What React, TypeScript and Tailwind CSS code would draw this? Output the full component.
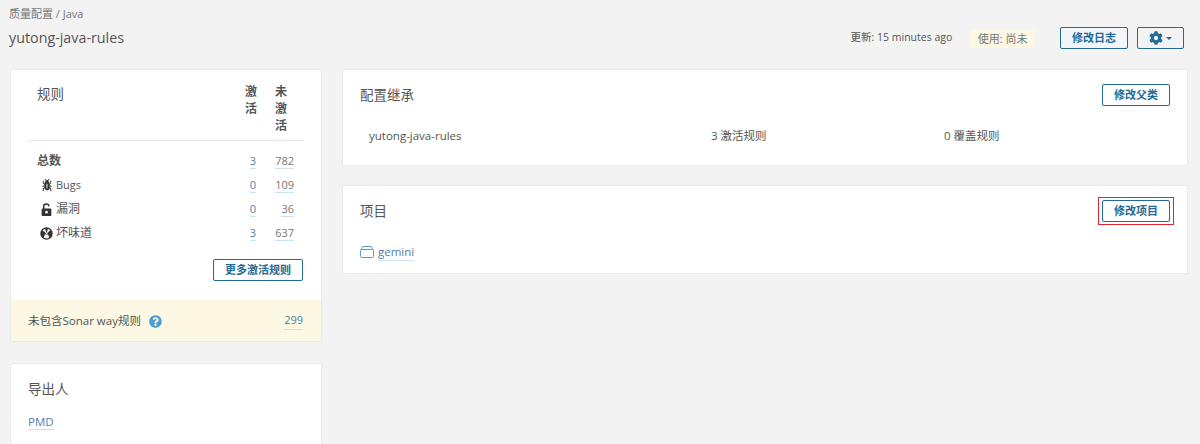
import React from "react";
import { FaCog, FaQuestionCircle } from "react-icons/fa";

/* ── Rule rows ── */

const RULE_ROWS = [
  { label: "Bugs", icon: "bug", active: "0", inactive: "109" },
  { label: "漏洞", icon: "lock", active: "0", inactive: "36" },
  { label: "坏味道", icon: "smell", active: "3", inactive: "637" },
];

function RuleIcon({ name }: { name: string }) {
  if (name === "bug") {
    return (
      <svg viewBox="0 0 16 16" className="h-[15px] w-[15px]" fill="#333">
        <path d="M11 9h1.3l.5.8.8-.5-.8-1.3H11v-.3l2-2.3V3h-1v2l-1 1.2V5c-.1-.8-.7-1.5-1.4-1.9L11 1.8l-.7-.7-1.8 1.6-1.8-1.6-.7.7 1.5 1.3C6.7 3.5 6.1 4.2 6 5v1.1L5 5V3H4v2.3l2 2.3V8H4.2l-.7 1.2.8.5.4-.7H6v.3l-2 1.9V14h1v-2.4l1-1C6 12 7.1 13.1 8.4 13h.8c.7 0 1.4-.3 1.8-.9.3-.4.3-.9.2-1.4l.9.9v2.4h1v-2.8l-2-1.9V9zm-2 2H8V6h1v5z" />
      </svg>
    );
  }
  if (name === "lock") {
    return (
      <svg viewBox="0 0 16 16" className="h-[15px] w-[15px]">
        <path d="M5 8V4.6C5 3 6.2 2 7.8 2c1.3 0 2.4.7 2.8 1.9" fill="none" stroke="#333" strokeWidth="1.6" strokeLinecap="round" />
        <rect x="2.8" y="7" width="10.4" height="8" rx="1.2" fill="#333" />
        <circle cx="8" cy="10.8" r="1.4" fill="#fff" />
      </svg>
    );
  }
  return (
    <svg viewBox="0 0 16 16" className="h-[15px] w-[15px]">
      <circle cx="8" cy="8" r="6.6" fill="#333" />
      <path d="M8 8 3.9 4.9A5.2 5.2 0 0 1 6.5 3zM8 8l4.1-3.1A5.2 5.2 0 0 0 9.5 3zM6.3 9h3.4l1.3 3.3a5.2 5.2 0 0 1-6 0z" fill="#f2f2f2" />
      <circle cx="8" cy="8" r="1" fill="#f2f2f2" />
    </svg>
  );
}

function ActionButton({ children }: { children: React.ReactNode }) {
  return (
    <button className="flex h-[22px] items-center rounded-[2px] border border-[#236a97] bg-white px-[11px] text-[11px] font-semibold text-[#236a97]">
      {children}
    </button>
  );
}

function CountCells({ active, inactive }: { active: string; inactive: string }) {
  return (
    <>
      <span className="border-b border-[#cae3f2] text-[11px] leading-[15px] text-[#4f81a6]">{active}</span>
      <span className="ml-[8px] mr-[10px] w-[30px] text-right text-[11px]">
        <span className="border-b border-[#cae3f2] leading-[15px] text-[#777]">{inactive}</span>
      </span>
    </>
  );
}

export default function App() {
  return (
    <div className="h-screen overflow-hidden bg-[#f3f3f3] pl-[10px] pr-[12px] font-['Open_Sans','Noto_Sans_CJK_SC',sans-serif] text-[#555]">
      {/* ── Page header ── */}
      <div className="flex h-[69px] items-start justify-between">
        <div className="-ml-px">
          <div className="pt-[6px] text-[11px] leading-[16px] text-[#777]">质量配置 / Java</div>
          <div className="pt-[6px] text-[14.3px] leading-[20px]">yutong-java-rules</div>
        </div>
        <div className="mr-[4px] flex items-center pt-[27px]">
          <span className="text-[10.5px]">更新: 15 minutes ago</span>
          <span className="ml-[18px] rounded-[2px] bg-[#fcf8e3] px-[7.5px] py-[2px] text-[11px] leading-[15px] text-[#777]">使用: 尚未</span>
          <div className="ml-[25px] flex gap-[9px]">
            <button className="flex h-[22px] items-center rounded-[2px] border border-[#236a97] bg-[#f3f6f8] px-[11px] text-[11px] font-semibold text-[#236a97]">修改日志</button>
            <button className="flex h-[22px] w-[47px] items-center justify-center gap-[3px] rounded-[2px] border border-[#236a97] text-[#236a97]">
              <FaCog className="h-[14px] w-[14px]" />
              <svg viewBox="0 0 8 4" className="h-[3px] w-[6px]" fill="#236a97"><path d="M0 0h8L4 4z" /></svg>
            </button>
          </div>
        </div>
      </div>

      <div className="flex items-start gap-5">
        {/* ── Left column ── */}
        <div className="flex w-[312px] flex-col gap-[21px]">
          <div className="overflow-hidden rounded-[2px] border border-[#ebebeb] bg-white">
            <div className="px-[17px] pt-[13px]">
              <div className="flex border-b border-[#e6e6e6] pb-[6px]">
                <div className="flex-1 pl-[9px] pt-px text-[13.5px] leading-[20px]">规则</div>
                <div className="w-[12px] break-all text-xs font-semibold leading-[17px]">激活</div>
                <div className="ml-[18px] mr-[17px] w-[12px] break-all text-xs font-semibold leading-[17px]">未激活</div>
              </div>
              <div className="mt-[8px] flex h-[24px] items-center pl-[9px]">
                <span className="flex-1 text-xs font-bold">总数</span>
                <CountCells active="3" inactive="782" />
              </div>
              {RULE_ROWS.map((row) => (
                <div key={row.label} className="flex h-[24px] items-center pl-[11px]">
                  <RuleIcon name={row.icon} />
                  <span className={row.label === "Bugs" ? "ml-[2px] flex-1 text-[11px]" : "ml-[2px] flex-1 text-xs"}>{row.label}</span>
                  <CountCells active={row.active} inactive={row.inactive} />
                </div>
              ))}
              <div className="flex justify-end pr-px pt-[14px]">
                <ActionButton>更多激活规则</ActionButton>
              </div>
            </div>
            <div className="mt-[19px] flex h-[41px] items-center justify-between bg-[#fcf8e3] pl-[17px] pr-[18px] pt-px text-[11.5px]">
              <span className="flex items-center">
                未包含Sonar way规则
                <FaQuestionCircle className="ml-2 h-[13px] w-[13px] text-[#4b9fd5]" />
              </span>
              <span className="border-b border-[#cae3f2] text-[11px] text-[#4f81a6]">299</span>
            </div>
          </div>

          <div className="h-[120px] rounded-[2px] border border-[#ebebeb] bg-white px-[17px] pt-[15px]">
            <div className="text-[13.5px] leading-[20px]">导出人</div>
            <div className="pt-[14px] text-[11.5px]"><span className="border-b border-[#cae3f2] text-[#4f81a6]">PMD</span></div>
          </div>
        </div>

        {/* ── Right column ── */}
        <div className="flex flex-1 flex-col gap-[19px]">
          <div className="h-[97px] rounded-[2px] border border-[#ebebeb] bg-white px-[17px] pt-[14px]">
            <div className="flex items-center justify-between">
              <span className="text-[13.5px]">配置继承</span>
              <ActionButton>修改父类</ActionButton>
            </div>
            <div className="mt-[21px] flex pl-[9px] text-[11.5px]">
              <span className="w-[342px]">yutong-java-rules</span>
              <span className="w-[233px]">3 激活规则</span>
              <span>0 覆盖规则</span>
            </div>
          </div>
          <div className="h-[89px] rounded-[2px] border border-[#ebebeb] bg-white px-[17px] pt-[11px]">
            <div className="flex items-center justify-between">
              <span className="text-[13.5px]">项目</span>
              <div className="-mr-[4px] border border-[#e0262c] p-[2px] px-[3px]">
                <ActionButton>修改项目</ActionButton>
              </div>
            </div>
            <div className="mt-[18px] flex items-center text-[11.5px]">
              <svg viewBox="0 0 14 12" className="mr-[4px] h-3 w-[14px]" fill="none" stroke="#5a9bcf"><path d="M1 4 2.5.5h9L13 4" /><rect x="0.5" y="3.5" width="13" height="8" rx="1" /></svg>
              <span className="border-b border-[#cae3f2] text-[#4f81a6]">gemini</span>
            </div>
          </div>
        </div>
      </div>
    </div>
  );
}
